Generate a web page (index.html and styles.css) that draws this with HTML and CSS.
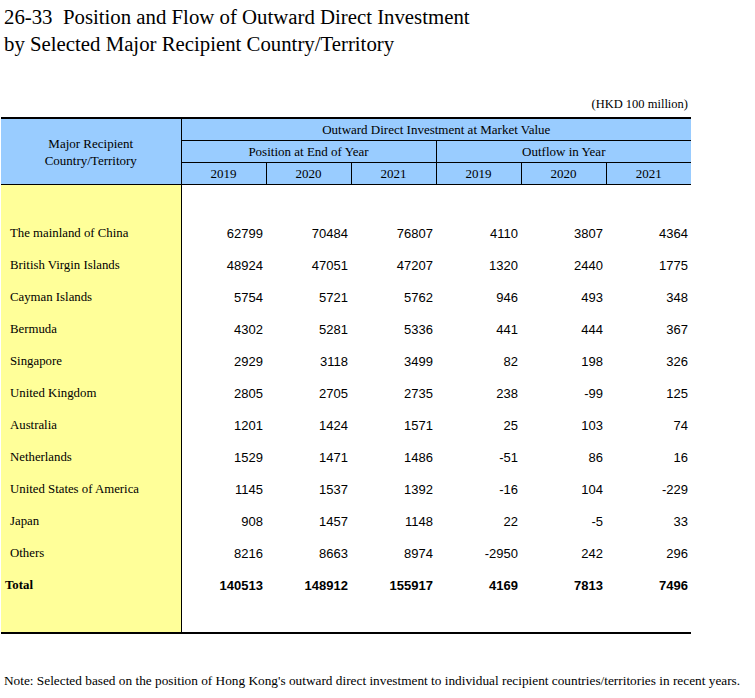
FILE: index.html
```html
<!DOCTYPE html>
<html>
<head>
<meta charset="utf-8">
<link rel="stylesheet" href="styles.css">
</head>
<body>
<h1 class="title">26-33&nbsp; Position and Flow of Outward Direct Investment<br>by Selected Major Recipient Country/Territory</h1>
<div class="unit">(HKD 100 million)</div>
<table class="tbl">
  <colgroup>
    <col class="c-name"><col class="c-num"><col class="c-num"><col class="c-num"><col class="c-num"><col class="c-num"><col class="c-num">
  </colgroup>
  <thead>
    <tr class="h1">
      <th rowspan="3" class="hname">Major Recipient<br>Country/Territory</th>
      <th colspan="6">Outward Direct Investment at Market Value</th>
    </tr>
    <tr class="h2">
      <th colspan="3" class="div">Position at End of Year</th>
      <th colspan="3">Outflow in Year</th>
    </tr>
    <tr class="h3">
      <th class="div">2019</th><th class="div">2020</th><th class="div">2021</th>
      <th class="div">2019</th><th class="div">2020</th><th>2021</th>
    </tr>
  </thead>
  <tbody>
    <tr class="spacer"><td class="name"></td><td colspan="6"></td></tr>
    <tr><td class="name">The mainland of China</td><td>62799</td><td>70484</td><td>76807</td><td>4110</td><td>3807</td><td>4364</td></tr>
    <tr><td class="name">British Virgin Islands</td><td>48924</td><td>47051</td><td>47207</td><td>1320</td><td>2440</td><td>1775</td></tr>
    <tr><td class="name">Cayman Islands</td><td>5754</td><td>5721</td><td>5762</td><td>946</td><td>493</td><td>348</td></tr>
    <tr><td class="name">Bermuda</td><td>4302</td><td>5281</td><td>5336</td><td>441</td><td>444</td><td>367</td></tr>
    <tr><td class="name">Singapore</td><td>2929</td><td>3118</td><td>3499</td><td>82</td><td>198</td><td>326</td></tr>
    <tr><td class="name">United Kingdom</td><td>2805</td><td>2705</td><td>2735</td><td>238</td><td>-99</td><td>125</td></tr>
    <tr><td class="name">Australia</td><td>1201</td><td>1424</td><td>1571</td><td>25</td><td>103</td><td>74</td></tr>
    <tr><td class="name">Netherlands</td><td>1529</td><td>1471</td><td>1486</td><td>-51</td><td>86</td><td>16</td></tr>
    <tr><td class="name">United States of America</td><td>1145</td><td>1537</td><td>1392</td><td>-16</td><td>104</td><td>-229</td></tr>
    <tr><td class="name">Japan</td><td>908</td><td>1457</td><td>1148</td><td>22</td><td>-5</td><td>33</td></tr>
    <tr><td class="name">Others</td><td>8216</td><td>8663</td><td>8974</td><td>-2950</td><td>242</td><td>296</td></tr>
    <tr class="total"><td class="name">Total</td><td>140513</td><td>148912</td><td>155917</td><td>4169</td><td>7813</td><td>7496</td></tr>
    <tr class="spacer end"><td class="name"></td><td colspan="6"></td></tr>
  </tbody>
</table>
<p class="note">Note: Selected based on the position of Hong Kong's outward direct investment to individual recipient countries/territories in recent years.</p>
</body>
</html>
```

FILE: styles.css
```css
html, body {
  margin: 0;
  padding: 0;
  background: #fff;
  color: #000;
}
body {
  font-family: "Liberation Serif", "Times New Roman", serif;
  width: 755px;
}
.title {
  margin: 0;
  padding: 3px 0 0 4px;
  font-size: 20.8px;
  font-weight: normal;
  line-height: 27px;
}
.unit {
  width: 688px;
  text-align: right;
  font-size: 12.5px;
  margin-top: 40px;
  line-height: 14px;
}
.tbl {
  margin: 6px 0 0 1px;
  width: 690px;
  table-layout: fixed;
  border-collapse: collapse;
  border-top: 2px solid #000;
  border-bottom: 2px solid #000;
}
.c-name { width: 180px; }
.c-num { width: 85px; }
.tbl th {
  background: #99ccff;
  font-weight: normal;
  font-size: 13px;
  padding: 0;
  text-align: center;
  border-bottom: 1px solid #000;
  height: 21px;
}
.tbl th.hname {
  border-right: 1px solid #000;
  line-height: 17px;
  padding-top: 1px;
}
.tbl th.div { border-right: 1px solid #000; }
.tbl td {
  padding: 0 3px 0 0;
  height: 32px;
  font-family: "Liberation Sans", Arial, sans-serif;
  font-size: 13px;
  text-align: right;
  vertical-align: middle;
}
.tbl td.name {
  background: #ffff99;
  border-right: 1px solid #000;
  text-align: left;
  padding: 0 0 0 9px;
  font-family: "Liberation Serif", "Times New Roman", serif;
  font-size: 12.8px;
}
.tbl .spacer td { height: 32px; }
.tbl .spacer.end td { height: 31px; }
.tbl .total td { font-weight: bold; }
.tbl .total td.name { padding-left: 4px; }
.note {
  margin: 39px 0 0 4px;
  font-size: 13.3px;
  line-height: 15px;
}
```
